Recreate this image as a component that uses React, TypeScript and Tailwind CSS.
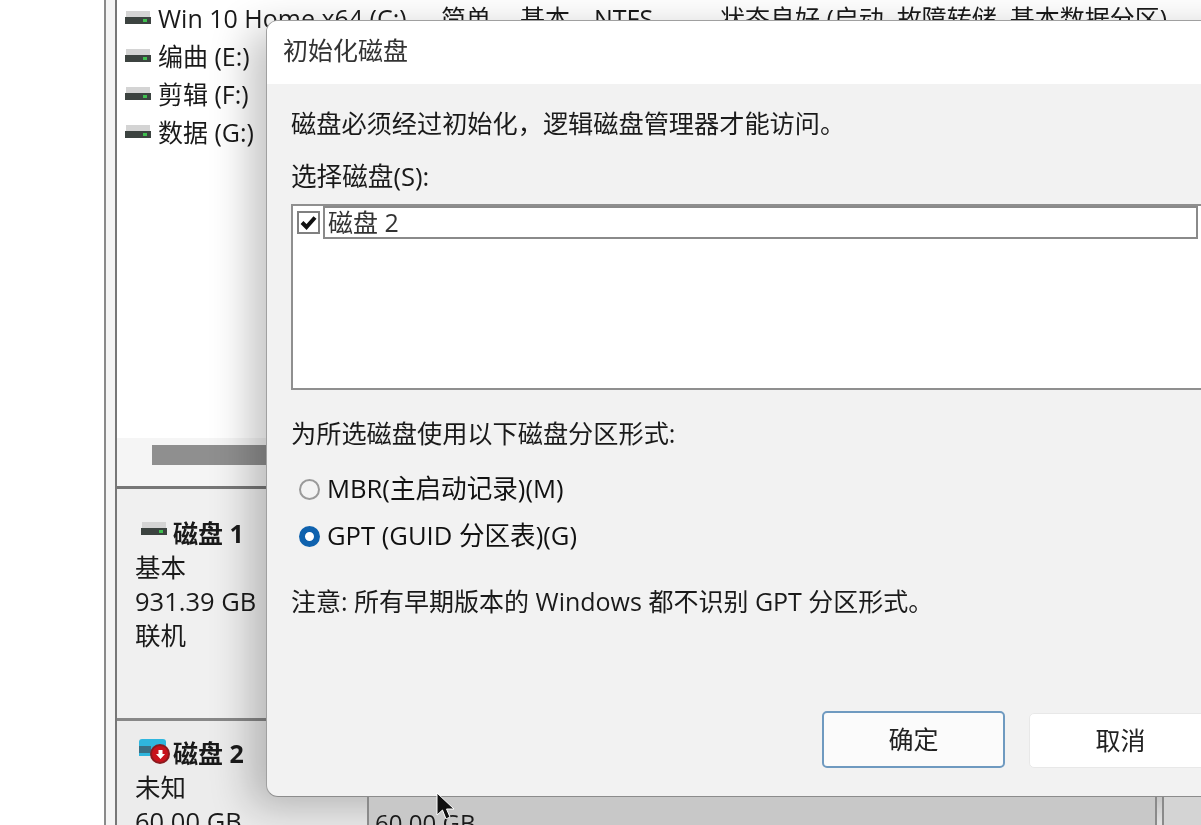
import React from 'react';

const font = "font-['Open_Sans','Noto_Sans_CJK_SC',sans-serif]";

const DriveIcon = () => (
  <svg width="26" height="14" viewBox="0 0 26 14" className="shrink-0">
    <rect x="1" y="0" width="24" height="6" fill="#d4d4d4" />
    <rect x="0" y="6" width="26" height="7" fill="#3c4340" />
    <rect x="18" y="8" width="4" height="3" fill="#3fc04f" />
  </svg>
);

const Volume = ({ label }: { label: string }) => (
  <div className="flex items-center h-[38px] gap-[7px] pl-[8px]">
    <DriveIcon />
    <span className="text-[25px] leading-[38px] whitespace-nowrap text-[#1a1a1a]">{label}</span>
  </div>
);

const Radio = ({ label, checked }: { label: string; checked?: boolean }) => (
  <div className="flex items-center h-[47px] pl-[8px] gap-[7px]">
    {checked ? (
      <span className="w-[21px] h-[21px] rounded-full border-[6px] border-[#0f62ae] bg-white shrink-0" />
    ) : (
      <span className="w-[21px] h-[21px] rounded-full border-2 border-[#9a9a9a] bg-[#f3f3f3] shrink-0" />
    )}
    <span className="text-[25.6px] whitespace-nowrap text-[#111]">{label}</span>
  </div>
);

const Dialog = () => (
  <div className="absolute left-[266px] top-[20px] w-[1000px] h-[777px] rounded-l-[12px] bg-[#f2f2f2] border border-[#a0a0a0] border-b-[#8c8c8c] shadow-[-16px_10px_40px_rgba(0,0,0,0.24)] overflow-hidden">
    <div className="h-[63px] bg-white flex items-center pl-[16px] text-[25px] text-[#333] pb-[4px]">初始化磁盘</div>
    <div className="pl-[24px] pt-[21px] text-[#1a1a1a]">
      <p className="text-[25.2px] leading-[36px] whitespace-nowrap">磁盘必须经过初始化，逻辑磁盘管理器才能访问。</p>
      <p className="text-[25.6px] leading-[36px] mt-[18px] whitespace-nowrap">选择磁盘(S):</p>
      <div className="mt-[9px] w-[990px] h-[186px] bg-white border-2 border-[#8f8f8f] pl-[4px]">
        <div className="flex items-center">
          <span className="w-[23px] h-[23px] border-2 border-[#808080] bg-white flex items-center justify-center shrink-0">
            <svg width="17" height="15" viewBox="0 0 17 15">
              <path d="M2 7.5 L6.5 12 L15 2.5" fill="none" stroke="#111" strokeWidth="4" />
            </svg>
          </span>
          <div className="ml-[3px] w-[875px] h-[33px] border-2 border-[#8a8a8a] flex items-center pl-[3px] text-[25px] text-[#333]">磁盘 2</div>
        </div>
      </div>
      <p className="text-[25.2px] leading-[36px] mt-[25px] whitespace-nowrap">为所选磁盘使用以下磁盘分区形式:</p>
      <div className="mt-[15px]">
        <Radio label="MBR(主启动记录)(M)" />
        <Radio label="GPT (GUID 分区表)(G)" checked />
      </div>
      <p className="text-[25px] leading-[36px] mt-[23px] whitespace-nowrap">注意: 所有早期版本的 Windows 都不识别 GPT 分区形式。</p>
      <div className="flex gap-[24px] mt-[92px] ml-[531px] items-end">
        <button className="w-[183px] h-[57px] rounded-[5px] bg-[#fbfbfb] border-2 border-[#6f9ac0] text-[25px] text-[#222]">确定</button>
        <button className="w-[183px] h-[55px] rounded-[5px] bg-white border border-[#e8e8e8] text-[25px] text-[#222]">取消</button>
      </div>
    </div>
  </div>
);

export default function App() {
  return (
    <div className={`relative w-[1201px] h-[825px] overflow-hidden bg-white blur-[0.6px] ${font}`}>
      <div className="flex h-full">
        <div className="w-[104px] shrink-0 bg-white" />
        <div className="w-[2px] bg-[#8a8a8a] shrink-0" />
        <div className="w-[9px] bg-[#f4f4f4] shrink-0" />
        <div className="flex-1 border-l-2 border-[#777] flex flex-col min-w-0 overflow-hidden">
          {/* volume list */}
          <div className="h-[438px] shrink-0 bg-white">
            <div className="-mt-[1px]">
              <div className="flex items-center h-[38px] pl-[8px] whitespace-nowrap text-[25px] leading-[38px] text-[#1a1a1a]">
                <DriveIcon />
                <span className="ml-[7px] w-[283px] shrink-0">Win 10 Home x64 (C:)</span>
                <span className="w-[79px] shrink-0">简单</span>
                <span className="w-[74px] shrink-0">基本</span>
                <span className="w-[126px] shrink-0">NTFS</span>
                <span>状态良好 (启动, 故障转储, 基本数据分区)</span>
              </div>
              <Volume label="编曲 (E:)" />
              <Volume label="剪辑 (F:)" />
              <Volume label="数据 (G:)" />
            </div>
          </div>
          <div className="h-[48px] shrink-0 bg-[#f5f5f5] pl-[35px] pt-[7px]">
            <div className="w-[300px] h-[20px] bg-[#8f8f8f]" />
          </div>
          <div className="h-[3px] shrink-0 bg-[#777]" />
          {/* disk rows */}
          <div className="h-[229px] shrink-0 bg-[#f0f0f0] pl-[18px] pt-[27px] text-[25.5px] leading-[34px] text-[#1a1a1a]">
            <div className="flex items-center pl-[6px] gap-[6px]">
              <span className="shrink-0 -mt-[8px] flex">
                <DriveIcon />
              </span>
              <span className="font-bold text-[25px]">磁盘 1</span>
            </div>
            <p>基本</p>
            <p>931.39 GB</p>
            <p>联机</p>
          </div>
          <div className="h-[3px] shrink-0 bg-[#888]" />
          <div className="flex-1 bg-[#ececec] pl-[18px] pt-[15px] text-[25.5px] leading-[34px] text-[#1a1a1a]">
            <div className="flex items-center pl-[4px]">
              <span className="relative w-[34px] h-[28px] shrink-0">
                <span className="absolute left-0 top-0 w-[27px] h-[17px] bg-[#2fb6de] rounded-t-[3px]" />
                <span className="absolute left-0 top-[7px] w-[12px] h-[7px] bg-[#3a6f84]" />
                <span className="absolute left-[11px] top-[5px] w-[20px] h-[20px] rounded-full bg-[#c8121c] border-2 border-[#8a1a1f] flex items-center justify-center">
                  <svg width="11" height="11" viewBox="0 0 11 11">
                    <path d="M3.5 1 H7.5 V5 H10 L5.5 10 L1 5 H3.5 Z" fill="#fff" />
                  </svg>
                </span>
              </span>
              <span className="font-bold text-[25px]">磁盘 2</span>
            </div>
            <p>未知</p>
            <p>60.00 GB</p>
          </div>
        </div>
      </div>
      <Dialog />
      {/* shadowed area under the dialog */}
      <div className="absolute left-[367px] top-[797px] w-[790px] h-[28px] bg-[#c8c8c8] border-l-2 border-r-2 border-[#8a8a8a] pl-[6px] pt-[11px] text-[24px] leading-[30px] text-[#1a1a1a]">60.00 GB</div>
      <div className="absolute left-[1162px] top-[797px] w-[39px] h-[28px] bg-[#d4d4d4] border-l-2 border-[#8a8a8a]" />
      <svg className="absolute left-[436px] top-[792px]" width="20" height="30" viewBox="0 0 20 30">
        <path d="M1 1 V23 L6.5 18 L10 27 L14 25 L10.5 17 H18 Z" fill="#111" stroke="#fff" strokeWidth="1" />
      </svg>
    </div>
  );
}
